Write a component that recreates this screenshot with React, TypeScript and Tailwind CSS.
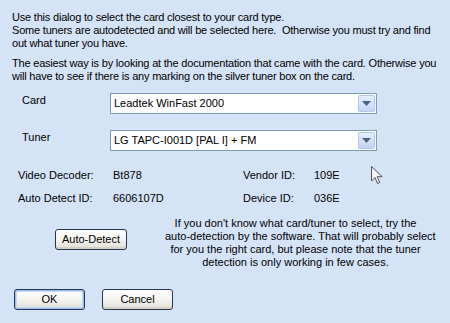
import React from "react";

const FONT = "font-['Liberation_Sans',Arial,sans-serif]";

function ComboBox({ value }: { value: string }) {
  return (
    <div className="flex h-[21px] w-[267px] items-center border border-[#7f9db9] bg-white pl-[3px] pr-[1px]">
      <span className="flex-1 whitespace-nowrap text-[11px] leading-none text-black">{value}</span>
      <div className="flex h-[17px] w-[17px] items-center justify-center rounded-[2px] border border-[#b0c6ea] bg-gradient-to-b from-[#e8effc] to-[#c3d4f7]">
        <svg width="9" height="5" viewBox="0 0 9 5">
          <path d="M0 0h9L4.5 5z" fill="#4d6185" />
        </svg>
      </div>
    </div>
  );
}

function XpButton({
  label,
  width,
  isDefault,
}: {
  label: string;
  width: string;
  isDefault?: boolean;
}) {
  return (
    <button
      className={`h-[21px] ${width} rounded-[3px] border border-[#25374f] bg-gradient-to-b from-white via-[#f4f4f0] to-[#dedcd4] text-[11px] leading-none text-black ${
        isDefault
          ? "shadow-[inset_0_0_0_1px_#9dbdee,inset_0_0_0_2px_#c4d8f6]"
          : "shadow-[inset_0_-2px_0_#d6d0c5]"
      }`}
    >
      {label}
    </button>
  );
}

export default function App() {
  return (
    <div
      className={`relative h-[323px] w-[450px] overflow-hidden bg-[#d5e3f6] text-[11px] text-black ${FONT}`}
    >
      <div className="whitespace-nowrap pl-[12px] pt-[11px] leading-[13px] tracking-[-0.2px]">
        <p>Use this dialog to select the card closest to your card type.</p>
        <p>
          Some tuners are autodetected and will be selected here.&nbsp; Otherwise you must try and find
          <br />
          out what tuner you have.
        </p>
        <p className="mt-[7px]">
          The easiest way is by looking at the documentation that came with the card. Otherwise you
          <br />
          will have to see if there is any marking on the silver tuner box on the card.
        </p>
      </div>

      <div className="mt-[10px] flex flex-col gap-[16px] pl-[22px]">
        <div className="flex items-center">
          <span className="w-[88px] -translate-y-[3px]">Card</span>
          <ComboBox value="Leadtek WinFast 2000" />
        </div>
        <div className="flex items-center">
          <span className="w-[88px] -translate-y-[3px]">Tuner</span>
          <ComboBox value="LG TAPC-I001D [PAL I] + FM" />
        </div>
      </div>

      <div className="mt-[18px] grid grid-cols-[95px_130px_71px_60px] gap-y-[10px] pl-[18px] leading-[13px]">
        <span>Video Decoder:</span>
        <span>Bt878</span>
        <span>Vendor ID:</span>
        <span>109E</span>
        <span>Auto Detect ID:</span>
        <span>6606107D</span>
        <span>Device ID:</span>
        <span>036E</span>
      </div>

      <div className="mt-[12px] flex items-start">
        <div className="w-[165px] pl-[55px] pt-[12px]">
          <XpButton label="Auto-Detect" width="w-[72px]" />
        </div>
        <p className="w-[261px] whitespace-nowrap text-center leading-[13px]">
          If you don't know what card/tuner to select, try the
          <br />
          auto-detection by the software. That will probably select
          <br />
          for you the right card, but please note that the tuner
          <br />
          detection is only working in few cases.
        </p>
      </div>

      <div className="mt-[20px] flex gap-[17px] pl-[14px]">
        <XpButton label="OK" width="w-[71px]" isDefault />
        <XpButton label="Cancel" width="w-[71px]" />
      </div>

      <svg className="absolute left-[371px] top-[166px]" width="12" height="19" viewBox="0 0 12 19">
        <path
          d="M0.5 0.5v14.5l3.5-3.5 2.5 6 2.2-1-2.5-5.8h5z"
          fill="#f4f4f4"
          stroke="#555"
          strokeWidth="1"
        />
      </svg>
    </div>
  );
}
